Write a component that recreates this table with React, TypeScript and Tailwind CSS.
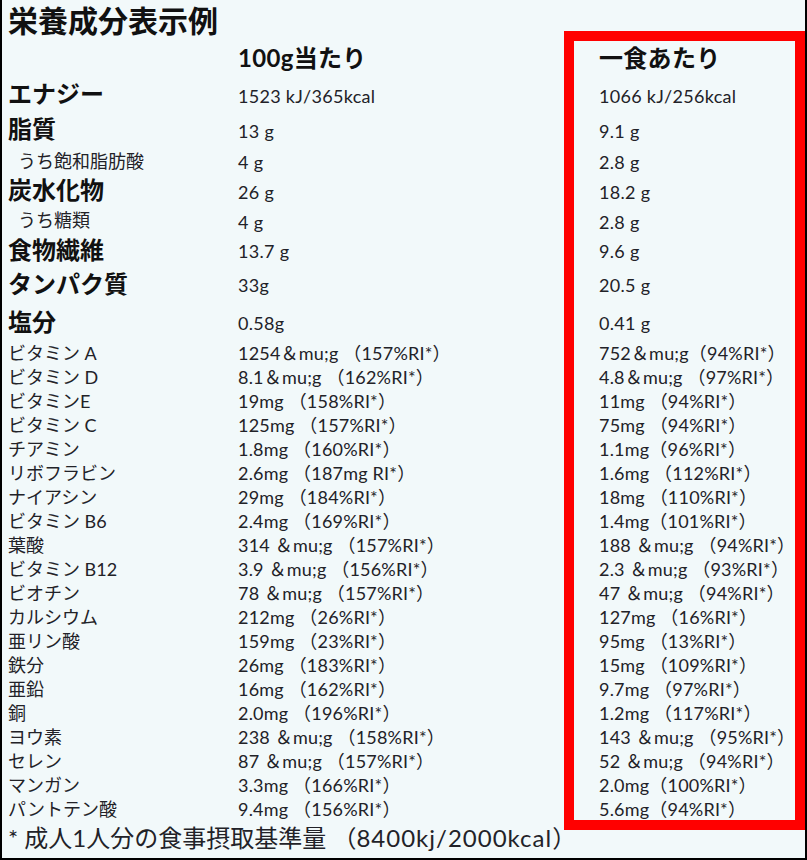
import React from "react";

type Row = { label: string; a: string; b: string; kind: "big" | "sub"; h: string };

const rows: Row[] = [
  { label: "エナジー", a: "1523 kJ/365kcal", b: "1066 kJ/256kcal", kind: "big", h: "h-[36px]" },
  { label: "脂質", a: "13 g", b: "9.1 g", kind: "big", h: "h-[34px]" },
  { label: "うち飽和脂肪酸", a: "4 g", b: "2.8 g", kind: "sub", h: "h-[29px]" },
  { label: "炭水化物", a: "26 g", b: "18.2 g", kind: "big", h: "h-[30px]" },
  { label: "うち糖類", a: "4 g", b: "2.8 g", kind: "sub", h: "h-[30px]" },
  { label: "食物繊維", a: "13.7 g", b: "9.6 g", kind: "big", h: "h-[29px]" },
  { label: "タンパク質", a: "33g", b: "20.5 g", kind: "big", h: "h-[39px]" },
  { label: "塩分", a: "0.58g", b: "0.41 g", kind: "big", h: "h-[37px]" },
];

const vitamins: [string, string, string][] = [
  ["ビタミン A", "1254＆mu;g （157%RI*）", "752＆mu;g（94%RI*）"],
  ["ビタミン D", "8.1＆mu;g （162%RI*）", "4.8＆mu;g （97%RI*）"],
  ["ビタミンE", "19mg （158%RI*）", "11mg （94%RI*）"],
  ["ビタミン C", "125mg （157%RI*）", "75mg （94%RI*）"],
  ["チアミン", "1.8mg （160%RI*）", "1.1mg（96%RI*）"],
  ["リボフラビン", "2.6mg （187mg RI*）", "1.6mg （112%RI*）"],
  ["ナイアシン", "29mg （184%RI*）", "18mg （110%RI*）"],
  ["ビタミン B6", "2.4mg （169%RI*）", "1.4mg（101%RI*）"],
  ["葉酸", "314 ＆mu;g （157%RI*）", "188 ＆mu;g （94%RI*）"],
  ["ビタミン B12", "3.9 ＆mu;g （156%RI*）", "2.3 ＆mu;g （93%RI*）"],
  ["ビオチン", "78 ＆mu;g （157%RI*）", "47 ＆mu;g （94%RI*）"],
  ["カルシウム", "212mg （26%RI*）", "127mg （16%RI*）"],
  ["亜リン酸", "159mg （23%RI*）", "95mg （13%RI*）"],
  ["鉄分", "26mg （183%RI*）", "15mg （109%RI*）"],
  ["亜鉛", "16mg （162%RI*）", "9.7mg （97%RI*）"],
  ["銅", "2.0mg （196%RI*）", "1.2mg （117%RI*）"],
  ["ヨウ素", "238 ＆mu;g （158%RI*）", "143 ＆mu;g （95%RI*）"],
  ["セレン", "87 ＆mu;g （157%RI*）", "52 ＆mu;g （94%RI*）"],
  ["マンガン", "3.3mg （166%RI*）", "2.0mg（100%RI*）"],
  ["パントテン酸", "9.4mg （156%RI*）", "5.6mg（94%RI*）"],
];

const font = "font-['Lato','Noto_Sans_CJK_JP',sans-serif]";

export default function App() {
  return (
    <div className={`relative w-[807px] h-[860px] bg-[#f2f9fa] text-[#222228] border-2 border-t-0 border-black overflow-hidden ${font}`}>
      <div className="pl-[6px]">
        <h1 className="h-[39px] flex items-center text-[30px] font-bold leading-none text-[#111]">栄養成分表示例</h1>

        <div className="grid grid-cols-[230px_361px_1fr] h-[37px] items-center text-[24px] font-bold text-[#111] tracking-[0.3px]">
          <div></div>
          <div>100g当たり</div>
          <div>一食あたり</div>
        </div>

        {rows.map((r) => (
          <div key={r.label} className={`grid grid-cols-[230px_361px_1fr] items-center ${r.h}`}>
            {r.kind === "big" ? (
              <div className="text-[24px] font-bold text-[#111] leading-none">{r.label}</div>
            ) : (
              <div className="text-[18px] pl-[10px] leading-none">{r.label}</div>
            )}
            <div className="text-[18px] tracking-[0.3px] leading-none pt-[3px]">{r.a}</div>
            <div className="text-[18px] tracking-[0.3px] leading-none pt-[3px]">{r.b}</div>
          </div>
        ))}

        {vitamins.map(([l, a, b]) => (
          <div key={l} className="grid grid-cols-[230px_361px_1fr] items-center h-[24px]">
            <div className="text-[18px]">{l}</div>
            <div className="text-[18px] tracking-[0.2px]">{a}</div>
            <div className="text-[18px] tracking-[0.2px]">{b}</div>
          </div>
        ))}

        <div className="h-[36px] flex items-center text-[24px]">
          * 成人1人分の食事摂取基準量 （<span className="tracking-[1px]">8400kj/2000kcal</span>）
        </div>
      </div>

      <div className="absolute left-[562px] top-[31px] w-[241px] h-[799px] border-[10px] border-[#ff0000]"></div>
    </div>
  );
}
